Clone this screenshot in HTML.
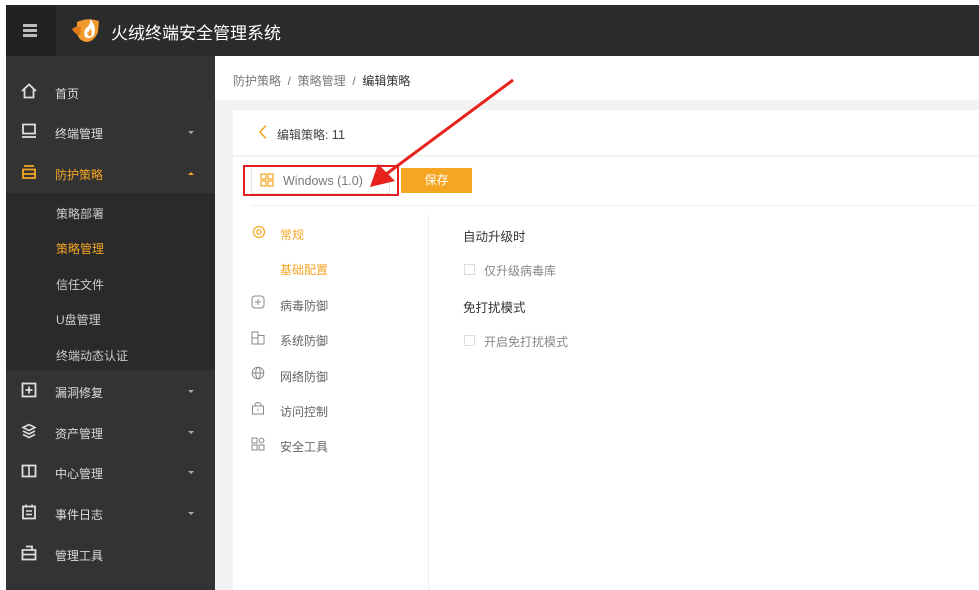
<!DOCTYPE html>
<html><head><meta charset="utf-8"><style>
*{margin:0;padding:0;box-sizing:border-box}
body{width:979px;height:590px;overflow:hidden;background:#fff;font-family:"Liberation Sans","Noto Sans CJK SC",sans-serif;font-size:12px;position:relative}
.a{position:absolute}
.top{left:6px;top:5px;width:973px;height:51px;background:#2b2b2b}
.ham{left:6px;top:5px;width:50px;height:51px;background:#222}
.side{left:6px;top:56px;width:209px;height:534px;background:#333}
.sub{left:6px;top:193px;width:209px;height:177px;background:#2a2a2a}
.mi{position:absolute;left:55px;color:#ddd;font-size:12px;font-weight:normal}
.ic{position:absolute;left:21px;width:16px;height:16px}
.car{position:absolute;left:188px;width:0;height:0;border-left:3px solid transparent;border-right:3px solid transparent;border-top:3px solid #aaa}
.smi{position:absolute;left:56px;color:#ccc;font-size:12px}
.content{left:215px;top:56px;width:764px;height:534px;background:#f2f2f2}
.chk{position:absolute;width:11px;height:11px;border:1px solid #ddd;background:#fff}
.g{color:#666}
</style></head><body>
<div class="a top"></div>
<div class="a ham"></div>
<div class="a" style="left:23px;top:24px;width:14px;height:3px;background:#bbb;box-shadow:0 5px 0 #bbb,0 10px 0 #bbb"></div>
<svg class="a" style="left:72px;top:15px" width="32" height="30" viewBox="0 0 32 30"><path d="M5 7 Q16 2 27 6 L26 17 Q22 27 14 27 Q5 25 5 16Z" fill="#f29a2e"/><path d="M0 14 Q5 10 9 12 L8 20 Q3 20 0 14Z" fill="#e07b1a"/><path d="M14 13 Q19 10 18 4 Q25 11 22 20 Q18 25 13 22 Q11 17 14 13Z" fill="#fff"/><path d="M15 18 Q18 16 18 13 Q21 17 19 21 Q16 22 15 18Z" fill="#f29a2e"/></svg>
<div class="a" style="left:111px;top:19px;color:#fff;font-size:17px">火绒终端安全管理系统</div>
<div class="a side"></div>
<div class="a sub"></div>
<svg class="ic" style="top:83px" viewBox="0 0 16 16"><path d="M1 8 L8 1.5 L15 8 M3.5 6 V14.5 H12.5 V6" fill="none" stroke="#ddd" stroke-width="1.8"/></svg>
<div class="mi" style="top:85px">首页</div>
<svg class="ic" style="top:123px" viewBox="0 0 16 16"><rect x="2" y="1.5" width="12" height="9" fill="none" stroke="#ddd" stroke-width="1.8"/><path d="M1 14H15" stroke="#ddd" stroke-width="1.8"/></svg>
<div class="mi" style="top:125px">终端管理</div><div class="car" style="top:131px"></div>
<svg class="ic" style="top:164px" viewBox="0 0 16 16"><path d="M3 2H13M1 5.5H15M2 5.5V14H14V5.5M1 10H15" fill="none" stroke="#f5a623" stroke-width="1.8"/></svg>
<div class="mi" style="top:166px;color:#f5a623">防护策略</div><div class="car" style="top:172px;border-top:0;border-bottom:3px solid #f5a623"></div>
<div class="smi" style="top:205px">策略部署</div>
<div class="smi" style="top:240px;color:#f5a623">策略管理</div>
<div class="smi" style="top:276px">信任文件</div>
<div class="smi" style="top:311px">U盘管理</div>
<div class="smi" style="top:347px">终端动态认证</div>
<svg class="ic" style="top:382px" viewBox="0 0 16 16"><rect x="1.5" y="1.5" width="13" height="13" fill="none" stroke="#ddd" stroke-width="1.8"/><path d="M8 4.5V11.5M4.5 8H11.5" stroke="#ddd" stroke-width="1.8"/></svg>
<div class="mi" style="top:384px">漏洞修复</div><div class="car" style="top:390px"></div>
<svg class="ic" style="top:423px" viewBox="0 0 16 16"><path d="M2 4.5 L8 1.5 L14 4.5 L8 7.5Z M2 8 L8 11 L14 8 M2 11.5 L8 14.5 L14 11.5" fill="none" stroke="#ddd" stroke-width="1.6"/></svg>
<div class="mi" style="top:425px">资产管理</div><div class="car" style="top:431px"></div>
<svg class="ic" style="top:463px" viewBox="0 0 16 16"><rect x="1.5" y="2.5" width="13" height="11" fill="none" stroke="#ddd" stroke-width="1.8"/><path d="M8 2.5V13.5" stroke="#ddd" stroke-width="1.6"/></svg>
<div class="mi" style="top:465px">中心管理</div><div class="car" style="top:471px"></div>
<svg class="ic" style="top:504px" viewBox="0 0 16 16"><rect x="2" y="2.5" width="12" height="12" fill="none" stroke="#ddd" stroke-width="1.8"/><path d="M5 0.5V3.5M11 0.5V3.5M5 7H11M5 10.5H11" stroke="#ddd" stroke-width="1.6"/></svg>
<div class="mi" style="top:506px">事件日志</div><div class="car" style="top:512px"></div>
<svg class="ic" style="top:545px" viewBox="0 0 16 16"><path d="M5 1.5H11V5M1.5 5H14.5V14.5H1.5Z M1.5 9.5H14.5" fill="none" stroke="#ddd" stroke-width="1.8"/></svg>
<div class="mi" style="top:547px">管理工具</div>
<div class="a content"></div>
<div class="a" style="left:215px;top:56px;width:764px;height:44px;background:#fff"></div>
<div class="a" style="left:233px;top:72px;color:#777">防护策略 &nbsp;/&nbsp; 策略管理 &nbsp;/&nbsp; <span style="color:#333">编辑策略</span></div>
<div class="a" style="left:233px;top:110px;width:746px;height:480px;background:#fff"></div>
<div class="a" style="left:233px;top:155px;width:746px;height:2px;background:#f2f2f2"></div>
<svg class="a" style="left:258px;top:124px" width="10" height="16" viewBox="0 0 10 16"><path d="M8 1.5 L2 8 L8 14.5" fill="none" stroke="#f5a623" stroke-width="1.6"/></svg>
<div class="a" style="left:277px;top:126px;color:#444">编辑策略: <span style="font-size:13px">11</span></div>
<div class="a" style="left:251px;top:166px;width:139px;height:28px;border:1px solid #e6e6e6;background:#fff"></div>
<svg class="a" style="left:260px;top:173px" width="14" height="14" viewBox="0 0 14 14"><path d="M1 1H6V6H1Z M8 1H13V6H8Z M1 8H6V13H1Z M8 8H13V13H8Z" fill="none" stroke="#f5a623" stroke-width="1.2"/></svg>
<div class="a" style="left:283px;top:174px;color:#777;font-size:12.5px">Windows (1.0)</div>
<div class="a" style="left:243px;top:165px;width:156px;height:31px;border:2px solid #e02020"></div>
<div class="a" style="left:401px;top:168px;width:71px;height:25px;background:#f5a623;color:#fff;text-align:center;line-height:25px">保存</div>
<div class="a" style="left:251px;top:205px;width:728px;height:1px;background:#eee"></div>
<div class="a" style="left:428px;top:214px;width:1px;height:376px;background:#eee"></div>
<svg class="a" style="left:252px;top:225px" width="14" height="14" viewBox="0 0 14 14"><circle cx="7" cy="7" r="5.5" fill="none" stroke="#f5a623" stroke-width="1.2"/><circle cx="7" cy="7" r="2.3" fill="none" stroke="#f5a623" stroke-width="1.2"/></svg>
<div class="a" style="left:280px;top:226px;color:#f5a623">常规</div>
<div class="a" style="left:280px;top:261px;color:#f5a623">基础配置</div>
<svg class="a" style="left:251px;top:295px" width="14" height="14" viewBox="0 0 14 14"><rect x="1" y="1" width="12" height="12" rx="3" fill="none" stroke="#888"/><path d="M7 4V10M4 7H10" stroke="#888"/></svg>
<div class="a g" style="left:280px;top:297px">病毒防御</div>
<svg class="a" style="left:251px;top:331px" width="14" height="14" viewBox="0 0 14 14"><path d="M1 1H7V13H1Z M7 4.5H13V13H7Z M1 7H7" fill="none" stroke="#888"/></svg>
<div class="a g" style="left:280px;top:332px">系统防御</div>
<svg class="a" style="left:251px;top:366px" width="14" height="14" viewBox="0 0 14 14"><circle cx="7" cy="7" r="5.8" fill="none" stroke="#888"/><ellipse cx="7" cy="7" rx="2.3" ry="5.8" fill="none" stroke="#888"/><path d="M1 7H13" stroke="#888"/></svg>
<div class="a g" style="left:280px;top:368px">网络防御</div>
<svg class="a" style="left:251px;top:401px" width="14" height="14" viewBox="0 0 14 14"><rect x="1.5" y="5" width="11" height="8" fill="none" stroke="#888"/><path d="M4 5V3Q7 0 10 3V5M7 8V10" fill="none" stroke="#888"/></svg>
<div class="a g" style="left:280px;top:403px">访问控制</div>
<svg class="a" style="left:251px;top:437px" width="14" height="14" viewBox="0 0 14 14"><path d="M1 1H6V6H1Z M1 8H6V13H1Z M8 8H13V13H8Z" fill="none" stroke="#888"/><circle cx="10.5" cy="3.5" r="2.4" fill="none" stroke="#888"/></svg>
<div class="a g" style="left:280px;top:438px">安全工具</div>
<div class="a" style="left:463px;top:226px;color:#333;font-size:12.5px">自动升级时</div>
<div class="chk" style="left:464px;top:264px"></div>
<div class="a" style="left:484px;top:262px;color:#888">仅升级病毒库</div>
<div class="a" style="left:463px;top:297px;color:#333;font-size:12.5px">免打扰模式</div>
<div class="chk" style="left:464px;top:335px"></div>
<div class="a" style="left:484px;top:333px;color:#888">开启免打扰模式</div>
<svg class="a" style="left:0;top:0" width="979" height="590"><line x1="513" y1="80" x2="385" y2="175" stroke="#e8221c" stroke-width="3"/><polygon points="370,187 378,164 395,181" fill="#e8221c"/></svg>
</body></html>
